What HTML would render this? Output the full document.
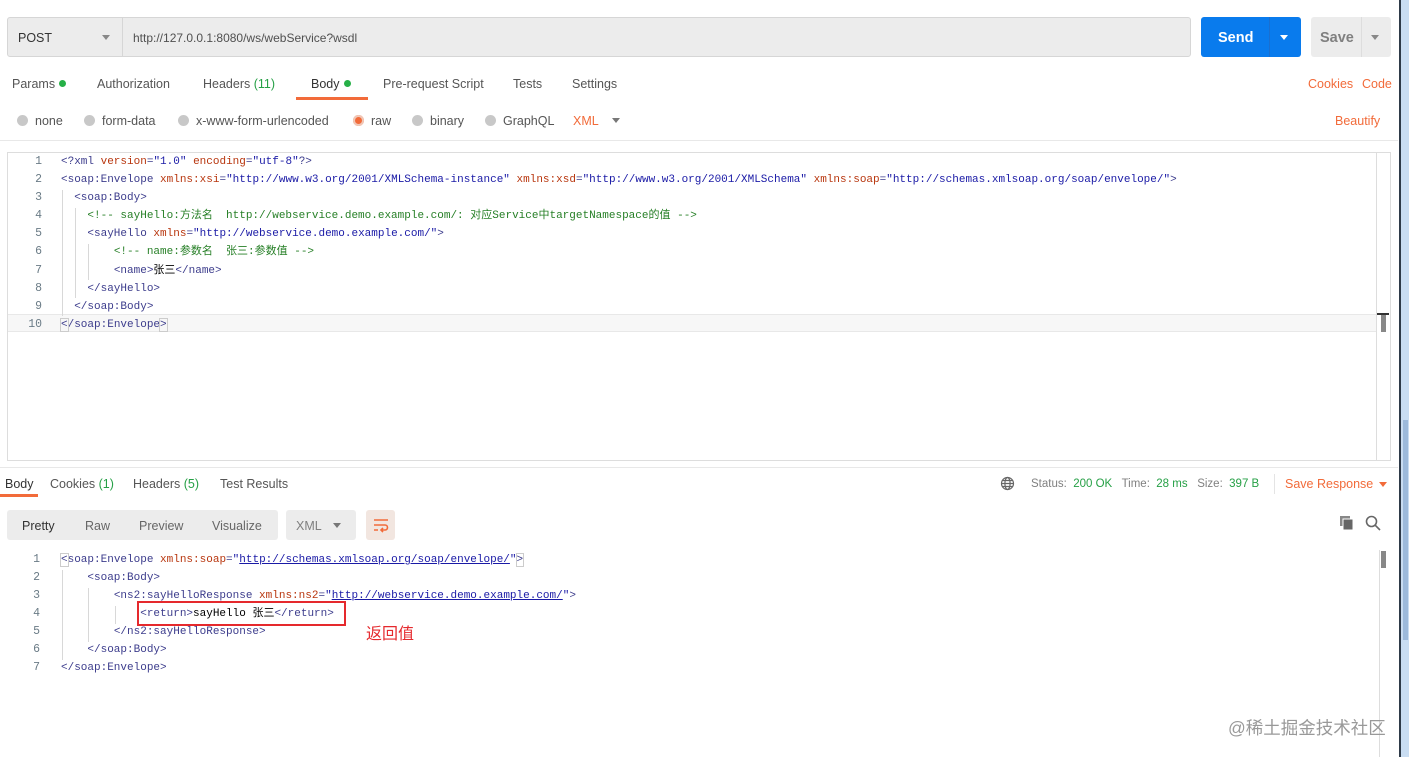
<!DOCTYPE html>
<html><head><meta charset="utf-8"><style>
*{margin:0;padding:0;box-sizing:border-box}
body{width:1409px;height:757px;background:#fff;position:relative;overflow:hidden;font-family:"Liberation Sans","Noto Sans CJK SC",sans-serif;font-size:12.5px;color:#555}
.a{position:absolute;white-space:pre}
.code{font-family:"Liberation Mono","Noto Sans CJK SC",monospace;font-size:11px;line-height:18px}
.t{color:#3c3c8c}.n{color:#b8360e}.s{color:#1a1aa6}.c{color:#267f26}.k{color:#000}
.ln{color:#6a7b86;text-align:right;width:20px;font-family:"Liberation Mono",monospace;font-size:11.5px}
.g{color:#26a046}
.dot{display:inline-block;width:7px;height:7px;border-radius:50%;background:#26b047;margin-left:4px;vertical-align:1px}
.rad{display:inline-block;width:11px;height:11px;border-radius:50%;background:#c8c8c8;vertical-align:-1px;margin-right:7px}
.guide{position:absolute;width:1px;background:#d8d8d8}
.u{text-decoration:underline;text-decoration-color:#1a1aa6}
</style></head><body>
<div class="a" style="left:7px;top:17px;width:1184px;height:40px;background:#ececec;border:1px solid #d6d6d6;border-radius:3px"></div>
<div class="a" style="left:122px;top:18px;width:1px;height:38px;background:#d6d6d6"></div>
<div class="a" style="left:18px;top:31px;color:#333;font-size:12.5px">POST</div>
<div class="a" style="left:102px;top:35px;border-left:4px solid transparent;border-right:4px solid transparent;border-top:5px solid #888"></div>
<div class="a" style="left:133px;top:31px;color:#505050;font-size:12px">http://127.0.0.1:8080/ws/webService?wsdl</div>
<div class="a" style="left:1201px;top:17px;width:100px;height:40px;background:#097bed;border-radius:3px"></div>
<div class="a" style="left:1269px;top:17px;width:1px;height:40px;background:#1a6fd0"></div>
<div class="a" style="left:1218px;top:30px;color:#fff;font-weight:bold;font-size:14.5px">Send</div>
<div class="a" style="left:1280px;top:35px;border-left:4px solid transparent;border-right:4px solid transparent;border-top:5px solid #fff"></div>
<div class="a" style="left:1311px;top:17px;width:80px;height:40px;background:#ececec;border-radius:3px"></div>
<div class="a" style="left:1361px;top:17px;width:1px;height:40px;background:#ddd"></div>
<div class="a" style="left:1320px;top:30px;color:#808080;font-weight:bold;font-size:14.5px">Save</div>
<div class="a" style="left:1371px;top:35px;border-left:4px solid transparent;border-right:4px solid transparent;border-top:5px solid #888"></div>
<div class="a" style="left:12px;top:77px">Params<span class="dot"></span></div>
<div class="a" style="left:97px;top:77px">Authorization</div>
<div class="a" style="left:203px;top:77px">Headers <span class="g">(11)</span></div>
<div class="a" style="left:311px;top:77px;color:#333">Body<span class="dot"></span></div>
<div class="a" style="left:296px;top:97px;width:72px;height:3px;background:#f26b3a"></div>
<div class="a" style="left:383px;top:77px">Pre-request Script</div>
<div class="a" style="left:513px;top:77px">Tests</div>
<div class="a" style="left:572px;top:77px">Settings</div>
<div class="a" style="left:1308px;top:77px;color:#f26b3a">Cookies</div>
<div class="a" style="left:1362px;top:77px;color:#f26b3a">Code</div>
<div class="a" style="left:17px;top:114px"><span class="rad"></span>none</div>
<div class="a" style="left:84px;top:114px"><span class="rad"></span>form-data</div>
<div class="a" style="left:178px;top:114px"><span class="rad"></span>x-www-form-urlencoded</div>
<div class="a" style="left:353px;top:114px"><span class="rad" style="background:#f26b3a;box-shadow:inset 0 0 0 2px #f0c8b8"></span>raw</div>
<div class="a" style="left:412px;top:114px"><span class="rad"></span>binary</div>
<div class="a" style="left:485px;top:114px"><span class="rad"></span>GraphQL</div>
<div class="a" style="left:573px;top:114px;color:#f26b3a">XML</div>
<div class="a" style="left:612px;top:118px;border-left:4px solid transparent;border-right:4px solid transparent;border-top:5px solid #777"></div>
<div class="a" style="left:1335px;top:114px;color:#f26b3a">Beautify</div>
<div class="a" style="left:0;top:140px;width:1398px;height:1px;background:#e8e8e8"></div>
<div class="a" style="left:7px;top:152px;width:1384px;height:309px;border:1px solid #ddd"></div>
<div class="a" style="left:1376px;top:153px;width:1px;height:307px;background:#ddd"></div>
<div class="a" style="left:8px;top:314px;width:1368px;height:18px;background:#f7f7f7;border-top:1px solid #e8e8e8;border-bottom:1px solid #e8e8e8"></div>
<div class="a" style="left:1377px;top:313px;width:12px;height:2px;background:#333"></div>
<div class="a" style="left:1381px;top:315px;width:5px;height:17px;background:#888"></div>
<div class="guide" style="left:62px;top:190px;height:126px"></div>
<div class="guide" style="left:75px;top:208px;height:90px"></div>
<div class="guide" style="left:88px;top:244px;height:36px"></div>
<div class="a ln" style="left:22px;top:153px;line-height:18.1px">1
2
3
4
5
6
7
8
9
10</div>
<div class="a code" style="left:61px;top:153px;line-height:18.1px"><span class="t">&lt;?xml </span><span class="n">version</span><span class="t">=</span><span class="s">"1.0"</span> <span class="n">encoding</span><span class="t">=</span><span class="s">"utf-8"</span><span class="t">?&gt;</span>
<span class="t">&lt;soap:Envelope </span><span class="n">xmlns:xsi</span><span class="t">=</span><span class="s">"http://www.w3.org/2001/XMLSchema-instance"</span> <span class="n">xmlns:xsd</span><span class="t">=</span><span class="s">"http://www.w3.org/2001/XMLSchema"</span> <span class="n">xmlns:soap</span><span class="t">=</span><span class="s">"http://schemas.xmlsoap.org/soap/envelope/"</span><span class="t">&gt;</span>
  <span class="t">&lt;soap:Body&gt;</span>
    <span class="c">&lt;!-- sayHello:方法名  http://webservice.demo.example.com/: 对应Service中targetNamespace的值 --&gt;</span>
    <span class="t">&lt;sayHello </span><span class="n">xmlns</span><span class="t">=</span><span class="s">"http://webservice.demo.example.com/"</span><span class="t">&gt;</span>
        <span class="c">&lt;!-- name:参数名  张三:参数值 --&gt;</span>
        <span class="t">&lt;name&gt;</span><span class="k">张三</span><span class="t">&lt;/name&gt;</span>
    <span class="t">&lt;/sayHello&gt;</span>
  <span class="t">&lt;/soap:Body&gt;</span>
<span class="t" style="outline:1px solid #ccc">&lt;</span><span class="t">/soap:Envelope</span><span class="t" style="outline:1px solid #ccc">&gt;</span></div>
<div class="a" style="left:0;top:467px;width:1398px;height:1px;background:#e8e8e8"></div>
<div class="a" style="left:5px;top:477px;color:#333">Body</div>
<div class="a" style="left:0;top:494px;width:38px;height:3px;background:#f26b3a"></div>
<div class="a" style="left:50px;top:477px">Cookies <span class="g">(1)</span></div>
<div class="a" style="left:133px;top:477px">Headers <span class="g">(5)</span></div>
<div class="a" style="left:220px;top:477px">Test Results</div>
<svg class="a" style="left:1000px;top:476px" width="15" height="15" viewBox="0 0 15 15" fill="none" stroke="#666" stroke-width="1.2"><circle cx="7.5" cy="7.5" r="6"/><ellipse cx="7.5" cy="7.5" rx="2.6" ry="6"/><path d="M1.5 7.5h12M2.5 4.5h10M2.5 10.5h10"/></svg>
<div class="a" style="left:1031px;top:478px;font-size:11.5px;color:#808080">Status:  <span class="g">200 OK</span>   Time:  <span class="g">28 ms</span>   Size:  <span class="g">397 B</span></div>
<div class="a" style="left:1274px;top:474px;width:1px;height:20px;background:#e4e4e4"></div>
<div class="a" style="left:1285px;top:477px;color:#f26b3a">Save Response</div>
<div class="a" style="left:1379px;top:482px;border-left:4px solid transparent;border-right:4px solid transparent;border-top:5px solid #f26b3a"></div>
<div class="a" style="left:7px;top:510px;width:271px;height:30px;background:#ececec;border-radius:3px"></div>
<div class="a" style="left:22px;top:519px;color:#333">Pretty</div>
<div class="a" style="left:85px;top:519px;color:#666">Raw</div>
<div class="a" style="left:139px;top:519px;color:#666">Preview</div>
<div class="a" style="left:212px;top:519px;color:#666">Visualize</div>
<div class="a" style="left:286px;top:510px;width:70px;height:30px;background:#ececec;border-radius:3px"></div>
<div class="a" style="left:296px;top:519px;color:#808080">XML</div>
<div class="a" style="left:333px;top:523px;border-left:4px solid transparent;border-right:4px solid transparent;border-top:5px solid #777"></div>
<div class="a" style="left:366px;top:510px;width:29px;height:30px;background:#f2e6e0;border-radius:3px"></div>
<svg class="a" style="left:372px;top:516px" width="18" height="18" viewBox="0 0 18 18" fill="none" stroke="#f26b3a" stroke-width="1.6"><path d="M2 4h14M2 9h11a2.5 2.5 0 0 1 0 5H9M11 12l-2 2 2 2M2 14h4"/></svg>
<svg class="a" style="left:1339px;top:515px" width="16" height="16" viewBox="0 0 16 16"><rect x="1" y="1" width="10" height="10" fill="#888"/><rect x="4" y="4" width="10" height="11" fill="#666" stroke="#fff" stroke-width="1"/></svg>
<svg class="a" style="left:1365px;top:515px" width="16" height="16" viewBox="0 0 16 16" fill="none" stroke="#666" stroke-width="1.6"><circle cx="6.5" cy="6.5" r="5"/><path d="M10.3 10.3L15 15"/></svg>
<div class="a" style="left:1379px;top:550px;width:1px;height:207px;background:#ddd"></div>
<div class="a" style="left:1381px;top:551px;width:5px;height:17px;background:#888"></div>
<div class="guide" style="left:62px;top:570px;height:90px"></div>
<div class="guide" style="left:88px;top:588px;height:54px"></div>
<div class="guide" style="left:115px;top:606px;height:18px"></div>
<div class="a ln" style="left:20px;top:551px;line-height:18px">1
2
3
4
5
6
7</div>
<div class="a code" style="left:61px;top:551px"><span class="t" style="outline:1px solid #ccc">&lt;</span><span class="t">soap:Envelope </span><span class="n">xmlns:soap</span><span class="t">=</span><span class="s">"<span class="u">http://schemas.xmlsoap.org/soap/envelope/</span>"</span><span class="t" style="outline:1px solid #ccc">&gt;</span>
    <span class="t">&lt;soap:Body&gt;</span>
        <span class="t">&lt;ns2:sayHelloResponse </span><span class="n">xmlns:ns2</span><span class="t">=</span><span class="s">"<span class="u">http://webservice.demo.example.com/</span>"</span><span class="t">&gt;</span>
            <span class="t">&lt;return&gt;</span><span class="k">sayHello 张三</span><span class="t">&lt;/return&gt;</span>
        <span class="t">&lt;/ns2:sayHelloResponse&gt;</span>
    <span class="t">&lt;/soap:Body&gt;</span>
<span class="t">&lt;/soap:Envelope&gt;</span></div>
<div class="a" style="left:137px;top:601px;width:209px;height:25px;border:2px solid #e5292d"></div>
<div class="a" style="left:366px;top:620px;color:#e5292d;font-size:16px">返回值</div>
<div class="a" style="left:1228px;top:715px;color:#999;font-size:17.5px">@稀土掘金技术社区</div>
<div class="a" style="left:1399px;top:0;width:2px;height:757px;background:#2e3a48"></div>
<div class="a" style="left:1401px;top:0;width:8px;height:757px;background:#c9ddf2"></div>
<div class="a" style="left:1403px;top:420px;width:5px;height:220px;background:#9dbadb"></div>
</body></html>
